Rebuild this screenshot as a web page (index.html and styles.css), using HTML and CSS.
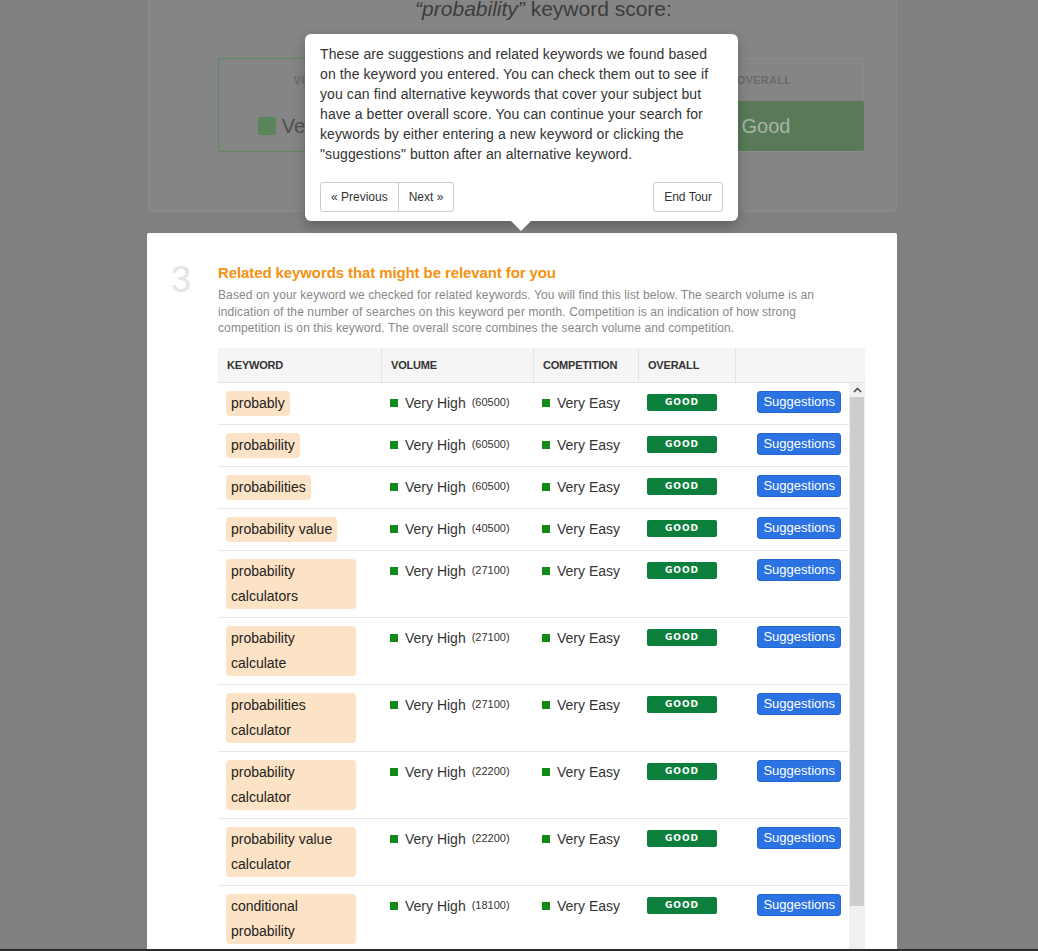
FILE: index.html
```html
<!DOCTYPE html>
<html lang="en">
<head>
<meta charset="utf-8">
<title>Keyword tool</title>
<link rel="stylesheet" href="styles.css">
</head>
<body>
<div class="stage">
  <div class="container">
    <section class="scorecard">
      <h2 class="sc-title"><em>“probability”</em> keyword score:</h2>
      <div class="sc-boxes">
        <div class="sc-box sc-box-green">
          <div class="sc-label">VOLUME</div>
          <div class="sc-value"><span class="sc-dot"></span>Very High</div>
        </div>
        <div class="sc-box">
          <div class="sc-label">COMPETITION</div>
          <div class="sc-value"><span class="sc-dot"></span>Very Easy</div>
        </div>
        <div class="sc-box sc-box-overall">
          <div class="sc-label">OVERALL</div>
          <div class="sc-good">Good</div>
        </div>
      </div>
    </section>

    <section class="related">
      <div class="step-num">3</div>
      <div class="related-body">
        <h3 class="related-title">Related keywords that might be relevant for you</h3>
        <p class="related-desc">Based on your keyword we checked for related keywords. You will find this list below. The search volume is an indication of the number of searches on this keyword per month. Competition is an indication of how strong competition is on this keyword. The overall score combines the search volume and competition.</p>

        <div class="kw-table">
          <div class="kw-head">
            <div class="th">KEYWORD</div>
            <div class="th">VOLUME</div>
            <div class="th">COMPETITION</div>
            <div class="th">OVERALL</div>
            <div class="th th-last"></div>
          </div>
          <div class="kw-scroll">
            <div class="kw-rows">
              <div class="kw-row">
                <div class="td"><span class="pill">probably</span></div>
                <div class="td"><span class="sq"></span>Very High<span class="num">(60500)</span></div>
                <div class="td"><span class="sq"></span>Very Easy</div>
                <div class="td"><span class="badge">GOOD</span></div>
                <div class="td td-btn"><span class="btn-sugg">Suggestions</span></div>
              </div>
              <div class="kw-row">
                <div class="td"><span class="pill">probability</span></div>
                <div class="td"><span class="sq"></span>Very High<span class="num">(60500)</span></div>
                <div class="td"><span class="sq"></span>Very Easy</div>
                <div class="td"><span class="badge">GOOD</span></div>
                <div class="td td-btn"><span class="btn-sugg">Suggestions</span></div>
              </div>
              <div class="kw-row">
                <div class="td"><span class="pill">probabilities</span></div>
                <div class="td"><span class="sq"></span>Very High<span class="num">(60500)</span></div>
                <div class="td"><span class="sq"></span>Very Easy</div>
                <div class="td"><span class="badge">GOOD</span></div>
                <div class="td td-btn"><span class="btn-sugg">Suggestions</span></div>
              </div>
              <div class="kw-row">
                <div class="td"><span class="pill">probability value</span></div>
                <div class="td"><span class="sq"></span>Very High<span class="num">(40500)</span></div>
                <div class="td"><span class="sq"></span>Very Easy</div>
                <div class="td"><span class="badge">GOOD</span></div>
                <div class="td td-btn"><span class="btn-sugg">Suggestions</span></div>
              </div>
              <div class="kw-row">
                <div class="td"><span class="pill">probability calculators</span></div>
                <div class="td"><span class="sq"></span>Very High<span class="num">(27100)</span></div>
                <div class="td"><span class="sq"></span>Very Easy</div>
                <div class="td"><span class="badge">GOOD</span></div>
                <div class="td td-btn"><span class="btn-sugg">Suggestions</span></div>
              </div>
              <div class="kw-row">
                <div class="td"><span class="pill">probability calculate</span></div>
                <div class="td"><span class="sq"></span>Very High<span class="num">(27100)</span></div>
                <div class="td"><span class="sq"></span>Very Easy</div>
                <div class="td"><span class="badge">GOOD</span></div>
                <div class="td td-btn"><span class="btn-sugg">Suggestions</span></div>
              </div>
              <div class="kw-row">
                <div class="td"><span class="pill">probabilities calculator</span></div>
                <div class="td"><span class="sq"></span>Very High<span class="num">(27100)</span></div>
                <div class="td"><span class="sq"></span>Very Easy</div>
                <div class="td"><span class="badge">GOOD</span></div>
                <div class="td td-btn"><span class="btn-sugg">Suggestions</span></div>
              </div>
              <div class="kw-row">
                <div class="td"><span class="pill">probability calculator</span></div>
                <div class="td"><span class="sq"></span>Very High<span class="num">(22200)</span></div>
                <div class="td"><span class="sq"></span>Very Easy</div>
                <div class="td"><span class="badge">GOOD</span></div>
                <div class="td td-btn"><span class="btn-sugg">Suggestions</span></div>
              </div>
              <div class="kw-row">
                <div class="td"><span class="pill">probability value calculator</span></div>
                <div class="td"><span class="sq"></span>Very High<span class="num">(22200)</span></div>
                <div class="td"><span class="sq"></span>Very Easy</div>
                <div class="td"><span class="badge">GOOD</span></div>
                <div class="td td-btn"><span class="btn-sugg">Suggestions</span></div>
              </div>
              <div class="kw-row">
                <div class="td"><span class="pill">conditional probability</span></div>
                <div class="td"><span class="sq"></span>Very High<span class="num">(18100)</span></div>
                <div class="td"><span class="sq"></span>Very Easy</div>
                <div class="td"><span class="badge">GOOD</span></div>
                <div class="td td-btn"><span class="btn-sugg">Suggestions</span></div>
              </div>
            </div>
            <div class="scrollbar">
              <div class="sb-up">
                <svg width="9" height="6" viewBox="0 0 9 6"><path d="M1 5 L4.5 1.5 L8 5" fill="none" stroke="#505050" stroke-width="1.6"/></svg>
              </div>
              <div class="sb-track"><div class="sb-thumb"></div></div>
            </div>
          </div>
        </div>
      </div>
    </section>
  </div>

  <div class="popover">
    <p class="popover-text">These are suggestions and related keywords we found based on the keyword you entered. You can check them out to see if you can find alternative keywords that cover your subject but have a better overall score. You can continue your search for keywords by either entering a new keyword or clicking the "suggestions" button after an alternative keyword.</p>
    <div class="popover-nav">
      <div class="btn-group">
        <span class="pbtn">« Previous</span><span class="pbtn">Next »</span>
      </div>
      <span class="pbtn pbtn-solo">End Tour</span>
    </div>
  </div>
</div>
<div class="bottom-bar"></div>
</body>
</html>
```

FILE: styles.css
```css
* { box-sizing: border-box; }

html, body {
  margin: 0;
  padding: 0;
}

body {
  height: 951px;
  overflow: hidden;
  background: #808080;
  font-family: "Liberation Sans", Arial, sans-serif;
  color: #333;
  display: flex;
  flex-direction: column;
}

.stage {
  flex: 1;
  position: relative;
  overflow: hidden;
}

.container {
  width: 750px;
  margin-left: 147px;
}

/* ---------- dimmed score card ---------- */
.scorecard {
  display: flow-root;
  height: 212px;
  margin-left: 1px;
  background: #858585;
  border: 1px solid #8b8b8b;
  border-top: none;
  border-radius: 0 0 3px 3px;
}

.sc-title {
  margin: -3px 0 0;
  padding-left: 42px;
  text-align: center;
  font-size: 21px;
  line-height: 24px;
  font-weight: normal;
  color: #3c3c3c;
}

.sc-title em {
  font-style: italic;
}

.sc-boxes {
  display: flex;
  gap: 23px;
  margin-top: 37px;
  padding-left: 69px;
}

.sc-box {
  width: 200px;
  height: 94px;
  border: 1px solid #8c8c8c;
  border-radius: 2px;
  text-align: center;
  padding-top: 14px;
}

.sc-box-green {
  border-color: #5e895e;
}

.sc-label {
  font-size: 11px;
  line-height: 14px;
  font-weight: bold;
  color: #6b6b6b;
  letter-spacing: 0.3px;
}

.sc-value {
  margin-top: 27px;
  font-size: 20px;
  line-height: 24px;
  color: #4e4e4e;
  display: flex;
  align-items: center;
  justify-content: center;
  gap: 6px;
  padding-right: 10px;
}

.sc-dot {
  width: 18px;
  height: 18px;
  border-radius: 3px;
  background: #5b855b;
}

.sc-good {
  margin: 14px -1px 0;
  height: 50px;
  line-height: 50px;
  background: #587a58;
  color: #a6b4a6;
  font-size: 20px;
  padding-left: 4px;
  border-radius: 0 0 2px 2px;
}

/* ---------- related keywords card ---------- */
.related {
  margin-top: 21px;
  background: #fff;
  border-radius: 2px 2px 0 0;
  display: flex;
  padding: 30px 32px 0 24px;
  height: 760px;
}

.step-num {
  width: 47px;
  font-size: 36px;
  line-height: 32px;
  color: #e4e4e4;
  padding-top: 1px;
}

.related-body {
  flex: 1;
}

.related-title {
  margin: 0;
  font-size: 15px;
  letter-spacing: -0.1px;
  line-height: 20px;
  font-weight: bold;
  color: #f39212;
}

.related-desc {
  margin: 4px 0 0;
  max-width: 636px;
  font-size: 12px;
  letter-spacing: 0.11px;
  line-height: 16.5px;
  color: #888;
}

.kw-table {
  margin-top: 11px;
}

.kw-head {
  display: grid;
  grid-template-columns: 163px 152px 105px 97px 1fr;
  background: #f5f5f5;
  border-bottom: 1px solid #e2e2e2;
  height: 35px;
}

.th {
  font-size: 11px;
  letter-spacing: -0.2px;
  font-weight: bold;
  color: #333;
  line-height: 34px;
  padding-left: 9px;
  border-left: 1px solid #e4e4e4;
}

.th:first-child {
  border-left: none;
}

.kw-scroll {
  display: flex;
}

.kw-rows {
  flex: 1;
}

.kw-row {
  display: grid;
  grid-template-columns: 163px 152px 105px 97px 1fr;
  padding: 8px 0;
  border-bottom: 1px solid #e6e6e6;
}

.td {
  font-size: 14px;
  line-height: 25px;
  padding-left: 9px;
  display: flex;
  align-items: flex-start;
}

.td:first-child {
  padding-left: 8px;
}

.pill {
  display: inline-block;
  max-width: 130px;
  padding: 0 5px;
  background: #fde3c5;
  border-radius: 4px;
  color: #222;
  line-height: 25px;
}

.sq {
  width: 8px;
  height: 8px;
  background: #128a16;
  margin: 8px 7px 0 0;
  flex: none;
}

.num {
  font-size: 11px;
  margin-left: 6px;
  line-height: 22px;
  color: #333;
}

.badge {
  display: block;
  width: 70px;
  height: 17px;
  margin-top: 3px;
  background: #0b7f3b;
  border-radius: 2px;
  color: #fff;
  font-family: "DejaVu Sans", Verdana, sans-serif;
  font-weight: bold;
  font-size: 9px;
  letter-spacing: 1px;
  line-height: 17px;
  text-align: center;
}

.td-btn {
  justify-content: flex-end;
  padding-right: 8px;
}

.btn-sugg {
  display: block;
  height: 22px;
  line-height: 20px;
  padding: 0 5px;
  background: #2b72e3;
  border: 1px solid #2467d0;
  border-radius: 3px;
  color: #fff;
  font-size: 13px;
}

.scrollbar {
  width: 16px;
  background: #f0f0f0;
  display: flex;
  flex-direction: column;
}

.sb-up {
  height: 14px;
  display: flex;
  align-items: center;
  justify-content: center;
}

.sb-track {
  flex: 1;
  padding: 0 1px;
}

.sb-thumb {
  height: 509px;
  background: #cdcdcd;
}

/* ---------- popover ---------- */
.popover {
  position: absolute;
  left: 305px;
  top: 34px;
  width: 433px;
  height: 187px;
  background: #fff;
  border-radius: 6px;
  box-shadow: 0 5px 12px rgba(0, 0, 0, 0.25);
  padding: 10px 15px 0;
}

.popover::after {
  content: "";
  position: absolute;
  left: 206px;
  bottom: -10px;
  border-left: 10px solid transparent;
  border-right: 10px solid transparent;
  border-top: 10px solid #fff;
}

.popover-text {
  margin: 0;
  width: 398px;
  font-size: 14px;
  letter-spacing: 0.1px;
  line-height: 20px;
  color: #333;
}

.popover-nav {
  margin-top: 18px;
  display: flex;
  justify-content: space-between;
}

.btn-group {
  display: flex;
}

.pbtn {
  display: block;
  height: 30px;
  line-height: 28px;
  padding: 0 10px;
  border: 1px solid #ccc;
  font-size: 12px;
  color: #333;
  background: #fff;
}

.btn-group .pbtn:first-child {
  border-radius: 3px 0 0 3px;
}

.btn-group .pbtn:last-child {
  border-radius: 0 3px 3px 0;
  border-left: none;
}

.pbtn-solo {
  border-radius: 3px;
}

.bottom-bar {
  height: 2px;
  background: #2b2b2b;
}
```
